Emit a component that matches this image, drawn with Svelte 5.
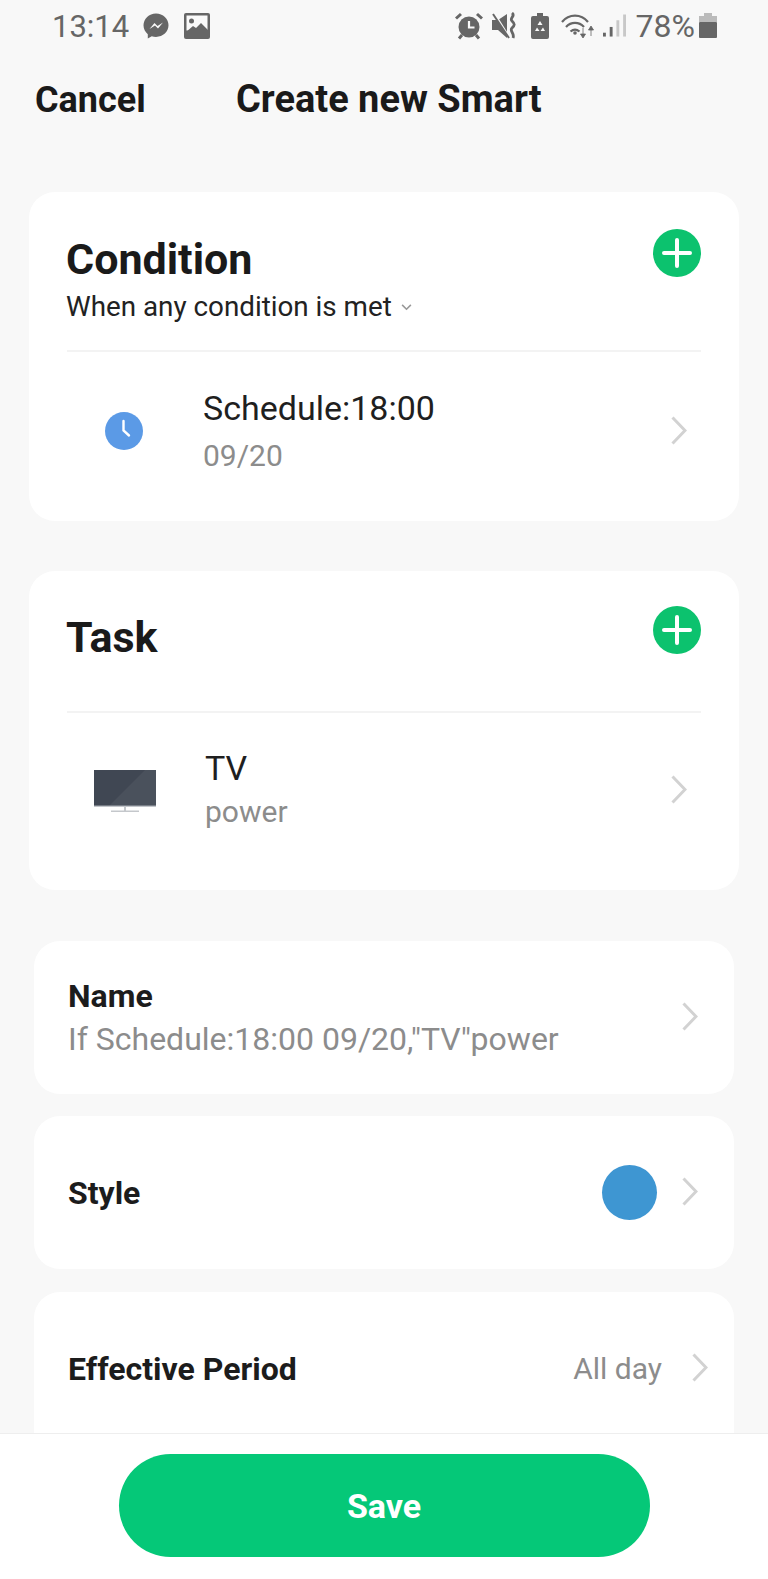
<script>
  const chevron = 'M1.500 1.500l12.500 13-12.500 13';
</script>

<div class="page">
  <header class="status">
    <div class="side">
      <span class="time">13:14</span>
      <svg class="msg" viewBox="0 0 26 26" width="26" height="26"><path d="M13 .5C6 .5.5 5.700.5 12.300c0 3.600 1.600 6.700 4.300 8.900v4.300l4-2.200c1.300.4 2.700.6 4.200.6 7 0 12.500-5.200 12.500-11.600S20 .5 13 .5z" fill="#666"/><path d="M6.500 16l5-6 3 3 5.500-3.500-5 6-3-3z" fill="#fafafa"/></svg>
      <svg class="pic" viewBox="0 0 26 26" width="26" height="26"><path d="M2 0h22a2 2 0 0 1 2 2v22a2 2 0 0 1-2 2H2a2 2 0 0 1-2-2V2a2 2 0 0 1 2-2z" fill="#666"/><rect x="2.500" y="2.500" width="21" height="15" fill="#fafafa"/><circle cx="7.500" cy="8" r="2.500" fill="#666"/><path d="M2 19l7-6 3 2 5-5 7 7v3H2z" fill="#666"/></svg>
    </div>
    <div class="side right">
      <svg class="alarm" viewBox="0 0 28 28" width="28" height="28"><circle cx="14" cy="15" r="10.500" fill="#666"/><path d="M14 9v6.500h5.500" fill="none" stroke="#fafafa" stroke-width="2.200"/><path d="M1 6.500l5-4.500M27 6.500l-5-4.500M7 23l-3 3.500M21 23l3 3.500" stroke="#666" stroke-width="3"/></svg>
      <svg class="mute" viewBox="0 0 28 28" width="28" height="28"><path d="M1 8h6l9-6v24l-9-8H1z" fill="#666"/><path d="M3 1l15 24" stroke="#fafafa" stroke-width="2.200"/><path d="M2 2l16 24" stroke="#666" stroke-width="2"/><path d="M21 1c4 3-3 5 0 8s3 4 0 7 3 5 1 10" fill="none" stroke="#666" stroke-width="2.800"/></svg>
      <svg class="saver" viewBox="0 0 18 26" width="18" height="26"><path d="M6 0h6v3h4a2 2 0 0 1 2 2v19a2 2 0 0 1-2 2H2a2 2 0 0 1-2-2V5a2 2 0 0 1 2-2h4z" fill="#666"/><path d="M9 8l2.500 4h-5zM4 18l2-3.500 2.500 3.500zM14 18l-2-3.500-2.500 3.500z" fill="#fafafa"/></svg>
      <svg class="wifi" viewBox="0 0 34 26" width="34" height="26"><path d="M1 9c7-8.500 19-8.500 26 0M5 14c5-5.500 13-5.500 18 0M9.500 18.500c3-2.500 6-2.500 9 0" fill="none" stroke="#666" stroke-width="2.200"/><circle cx="14" cy="20" r="1.800" fill="#666"/><path d="M22 15v7M19.500 21l2.500 4 2.500-4zM30 23v-7M27.500 17l2.500-4 2.500 4z" fill="#666" stroke="#666" stroke-width=".8"/></svg>
      <svg class="signal" viewBox="0 0 24 28" width="23" height="28"><rect x="0" y="21" width="3" height="4" fill="#666"/><rect x="7" y="15" width="3" height="10" fill="#666"/><rect x="14" y="8" width="3" height="17" fill="#c8c8c8"/><rect x="21" y="2" width="3" height="23" fill="#c8c8c8"/></svg>
      <span class="pct">78%</span>
      <svg class="batt" viewBox="0 0 18 26" width="18" height="26"><rect x="5" y="0" width="8" height="3" fill="#bbb"/><rect x="0" y="3" width="18" height="6" fill="#bbb"/><rect x="0" y="9" width="18" height="16" rx="1" fill="#666"/></svg>
    </div>
  </header>

  <nav class="nav">
    <span class="cancel">Cancel</span>
    <span class="title">Create new Smart</span>
  </nav>

  <section class="card big cond">
    <div class="head">
      <div>
        <h2>Condition</h2>
        <div class="when">When any condition is met<svg viewBox="0 0 12 8" width="11" height="7"><path d="M1 1l5 5 5-5" fill="none" stroke="#999" stroke-width="1.800"/></svg></div>
      </div>
      <span class="add"><svg viewBox="0 0 48 48" width="48" height="48"><circle cx="24" cy="24" r="24" fill="#0cc26e"/><path d="M24 11v26M11 24h26" stroke="#fff" stroke-width="4" stroke-linecap="round"/></svg></span>
    </div>
    <div class="item sched">
      <span class="icon"><svg viewBox="0 0 40 40" width="40" height="40"><circle cx="20" cy="20" r="19" fill="#5b9ae6"/><path d="M19.500 10v9.500l5.500 5" fill="none" stroke="#fff" stroke-width="2.400" stroke-linecap="round"/></svg></span>
      <div class="texts">
        <div class="main">Schedule:18:00</div>
        <div class="sub">09/20</div>
      </div>
      <svg class="chev" viewBox="0 0 16 29" width="16" height="29"><path d={chevron} fill="none" stroke="#d2d2d2" stroke-width="3"/></svg>
    </div>
  </section>

  <section class="card big task">
    <div class="head">
      <h2>Task</h2>
      <span class="add"><svg viewBox="0 0 48 48" width="48" height="48"><circle cx="24" cy="24" r="24" fill="#0cc26e"/><path d="M24 11v26M11 24h26" stroke="#fff" stroke-width="4" stroke-linecap="round"/></svg></span>
    </div>
    <div class="item tv">
      <span class="icon"><svg viewBox="0 0 62 44" width="62" height="44"><rect x="0" y="0" width="62" height="36" fill="#404753"/><path d="M15 36L51 0h11v36z" fill="#4a515c"/><rect x="0" y="35.500" width="62" height="1.200" fill="#a8adb4"/><rect x="30" y="37" width="2" height="4" fill="#c4c7cb"/><rect x="17" y="40.500" width="28" height="1.500" fill="#c4c7cb"/></svg></span>
      <div class="texts">
        <div class="main">TV</div>
        <div class="sub">power</div>
      </div>
      <svg class="chev" viewBox="0 0 16 29" width="16" height="29"><path d={chevron} fill="none" stroke="#d2d2d2" stroke-width="3"/></svg>
    </div>
  </section>

  <section class="card row name">
    <div class="grow">
      <div class="label">Name</div>
      <div class="desc">If Schedule:18:00 09/20,"TV"power</div>
    </div>
    <svg class="chev" viewBox="0 0 16 29" width="16" height="29"><path d={chevron} fill="none" stroke="#d2d2d2" stroke-width="3"/></svg>
  </section>

  <section class="card row style">
    <div class="grow label">Style</div>
    <span class="dot"></span>
    <svg class="chev" viewBox="0 0 16 29" width="16" height="29"><path d={chevron} fill="none" stroke="#d2d2d2" stroke-width="3"/></svg>
  </section>

  <section class="card row period">
    <div class="grow label">Effective Period</div>
    <span class="val">All day</span>
    <svg class="chev" viewBox="0 0 16 29" width="16" height="29"><path d={chevron} fill="none" stroke="#d2d2d2" stroke-width="3"/></svg>
  </section>

  <footer class="footer">
    <button class="save">Save</button>
  </footer>
</div>

<style>
  :global(body) { margin: 0; background: #f8f8f8; }
  .page {
    position: relative;
    width: 768px;
    height: 1579px;
    overflow: hidden;
    background: #f8f8f8;
    font-family: Roboto, "Liberation Sans", sans-serif;
    color: #1c1c1c;
  }
  .status {
    height: 52px;
    box-sizing: border-box;
    padding-top: 11px;
    display: flex;
    justify-content: space-between;
    align-items: flex-start;
  }
  .side { display: flex; align-items: center; height: 30px; margin-left: 52px; }
  .side.right { margin-left: 0; margin-right: 51px; }
  .time { font-size: 31px; color: #666; margin-right: 14px; }
  .pic { margin-left: 15px; }
  .mute { margin-left: 8px; }
  .saver { margin-left: 12px; }
  .wifi { margin-left: 12px; }
  .signal { margin-left: 8px; }
  .pct { font-size: 32px; color: #666; margin-left: 10px; }
  .batt { margin-left: 4px; }
  .nav {
    display: flex;
    align-items: baseline;
    height: 96px;
    padding: 25px 0 0 35px;
    box-sizing: border-box;
    font-weight: 700;
    color: #1a1a1a;
  }
  .cancel { width: 201px; font-size: 36px; }
  .title { font-size: 38px; }
  .card { background: #fff; border-radius: 26px; box-sizing: border-box; }
  .big { margin: 44px 29px 0; padding: 0 38px; }
  .cond { height: 329px; }
  .task { height: 319px; margin-top: 50px; }
  .head { display: flex; justify-content: space-between; align-items: flex-start; box-sizing: border-box; border-bottom: 2px solid #f3f3f3; }
  .cond .head { height: 160px; padding-top: 35px; }
  .task .head { height: 142px; padding-top: 36px; }
  h2 { margin: 0; font-size: 43px; font-weight: 700; line-height: 50px; color: #1a1a1a; margin-left: -1px; }
  .cond h2 { margin-top: 7px; }
  .task h2 { margin-top: 5px; }
  .when { font-size: 27.8px; line-height: 32px; margin-top: 7px; margin-left: -1px; color: #222; }
  .when svg { margin-left: 9px; vertical-align: 5px; }
  .add { display: block; margin-top: 2px; height: 48px; }
  .task .add { margin-top: -1px; }
  .item { display: flex; align-items: center; }
  .sched { height: 158px; }
  .tv { height: 155px; }
  .icon { display: flex; justify-content: center; width: 114px; flex: none; margin-right: 22px; }
  .tv .icon { width: 116px; padding-top: 2px; }
  .texts { flex: 1; }
  .main { font-size: 34px; line-height: 42px; color: #1f1f1f; }
  .sub { font-size: 30px; line-height: 36px; color: #8c8c8c; }
  .sched .sub { margin-top: 9px; }
  .tv .sub { margin-top: 5px; }
  .sched .texts { padding-bottom: 2px; }
  .tv .texts { padding-bottom: 4px; }
  .chev { flex: none; margin-right: 14px; margin-bottom: 2px; }
  .row { margin: 0 34px; padding: 0 34px; display: flex; align-items: center; height: 153px; }
  .name { margin-top: 51px; }
  .style { margin-top: 22px; }
  .period { margin-top: 23px; height: 200px; padding-bottom: 47px; }
  .grow { flex: 1; }
  .label { font-size: 32px; font-weight: 700; color: #1c1c1c; line-height: 40px; }
  .desc { font-size: 32px; color: #8c8c8c; line-height: 40px; margin-top: 3px; }
  .row .chev { margin-right: 2px; }
  .dot { width: 55px; height: 55px; border-radius: 50%; background: #3e96d2; margin-right: 25px; }
  .val { font-size: 30px; color: #8c8c8c; margin-right: 30px; }
  .period .chev { margin-right: -8px; }
  .footer {
    position: absolute;
    left: 0; right: 0; bottom: 0;
    height: 146px;
    background: #fff;
    border-top: 1px solid #eee;
    box-sizing: border-box;
    display: flex;
    justify-content: center;
    padding-top: 20px;
  }
  .save {
    width: 531px;
    height: 103px;
    border: none;
    border-radius: 52px;
    background: #05c878;
    color: #fff;
    font: 700 34px Roboto, "Liberation Sans", sans-serif;
    padding: 0;
  }
</style>
